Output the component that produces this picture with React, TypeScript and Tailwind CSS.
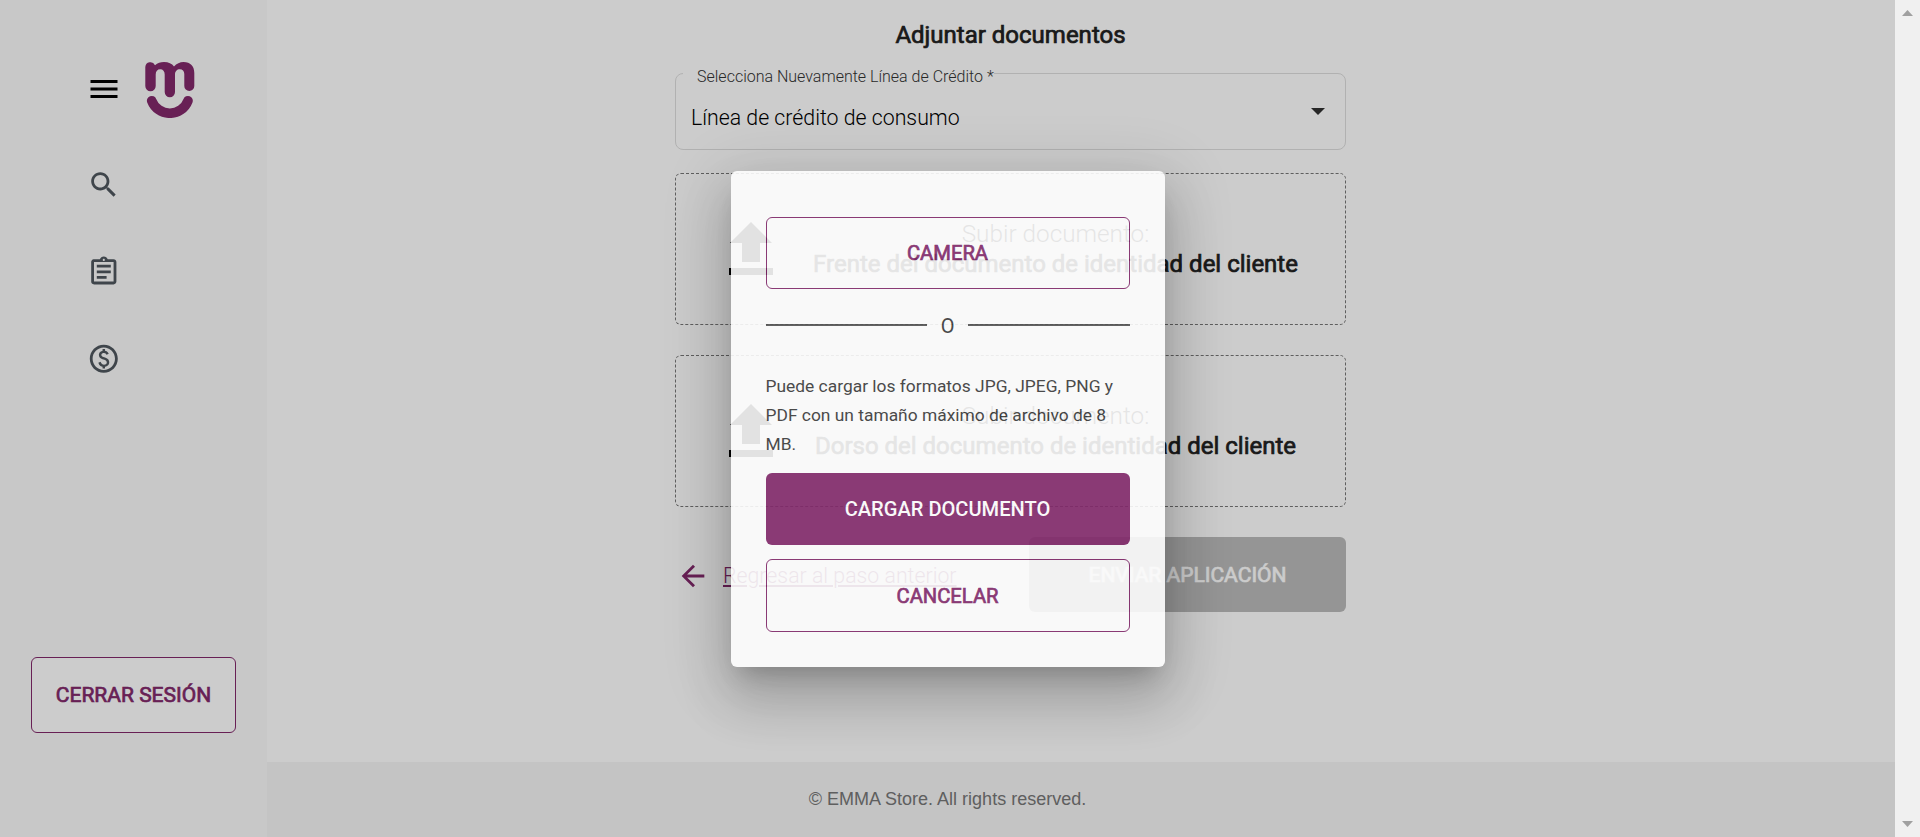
import React from "react";

type IconProps = { d: string; className: string };

function Icon({ d, className }: IconProps) {
  return (
    <svg viewBox="0 0 24 24" fill="currentColor" className={className}>
      <path d={d} />
    </svg>
  );
}

const MENU = "M3 18h18v-2H3v2zm0-5h18v-2H3v2zm0-7v2h18V6H3z";
const SEARCH =
  "M15.5 14h-.79l-.28-.27C15.41 12.59 16 11.11 16 9.5 16 5.91 13.09 3 9.5 3S3 5.91 3 9.5 5.91 16 9.5 16c1.61 0 3.09-.59 4.23-1.57l.27.28v.79l5 4.99L20.49 19l-4.99-5zm-6 0C7.01 14 5 11.99 5 9.5S7.01 5 9.5 5 14 7.01 14 9.5 11.99 14 9.5 14z";
const ASSIGNMENT =
  "M7 15h7v2H7zm0-4h10v2H7zm0-4h10v2H7zm12-4h-4.18C14.4 1.84 13.3 1 12 1c-1.3 0-2.4.84-2.82 2H5c-.14 0-.27.01-.4.04-.39.08-.74.28-1.01.55-.18.18-.33.4-.43.64-.1.23-.16.49-.16.77v14c0 .27.06.54.16.78s.25.45.43.64c.27.27.62.47 1.01.55.13.02.26.03.4.03h14c1.1 0 2-.9 2-2V5c0-1.1-.9-2-2-2zm-7-.25c.41 0 .75.34.75.75s-.34.75-.75.75-.75-.34-.75-.75.34-.75.75-.75zM19 19H5V5h14v14z";
const PAID =
  "M12 2C6.48 2 2 6.48 2 12s4.48 10 10 10 10-4.48 10-10S17.52 2 12 2zm0 18c-4.41 0-8-3.59-8-8s3.59-8 8-8 8 3.59 8 8-3.59 8-8 8zm.89-8.9c-1.78-.59-2.64-.96-2.64-1.9 0-1.02 1.11-1.39 1.81-1.39 1.31 0 1.79.99 1.9 1.34l1.58-.67c-.15-.44-.82-1.91-2.66-2.23V5h-1.75v1.26c-2.6.56-2.62 2.85-2.62 2.96 0 2.27 2.25 2.91 3.35 3.31 1.58.56 2.28 1.07 2.28 2.03 0 1.13-1.05 1.61-1.98 1.61-1.82 0-2.34-1.87-2.4-2.09l-1.66.67c.63 2.19 2.28 2.78 3.02 2.96V19h1.75v-1.24c.52-.09 3.02-.59 3.02-3.22.01-1.39-.6-2.61-3-3.44z";
const BACK = "M20 11H7.83l5.59-5.59L12 4l-8 8 8 8 1.41-1.41L7.83 13H20v-2z";

function Logo() {
  return (
    <svg viewBox="5 5 50 57" className="h-[57px] w-[50px] text-[#82286b]">
      <path
        fill="currentColor"
        d="M5.3 11A5.1 5.1 0 0 1 15 9.2C17.5 7 20.5 6 24 6C28.5 6 32 7.5 34 10.5C36.5 7.5 40 6 43.5 6C50.5 6 54.3 10 54.3 17V30A5 5 0 0 1 44.3 30V18C44.3 15 42.5 13.3 39.8 13.3C37 13.3 35 15.3 35 18.5V36A5.15 5.15 0 0 1 24.7 36V18.5C24.7 15.3 23 13.3 20.2 13.3C17.4 13.3 15.7 15.3 15.7 18.5V30A5.2 5.2 0 0 1 5.3 30Z"
      />
      <path fill="none" stroke="currentColor" strokeWidth="9.6" strokeLinecap="round" d="M11.7 44.7A19.4 19.4 0 0 0 48 44.7" />
    </svg>
  );
}

function Sidebar() {
  return (
    <aside className="flex w-[267px] shrink-0 flex-col bg-[#fafafa]">
      <div className="flex h-[141px] items-start pl-[86px] pt-[61px]">
        <Icon d={MENU} className="mt-[10px] h-9 w-9 text-black" />
        <div className="ml-[23px]"><Logo /></div>
      </div>
      <nav className="flex flex-col text-[#4f575e]">
        {[SEARCH, ASSIGNMENT, PAID].map((d, i) => (
          <a key={i} className="flex h-[87px] items-center pl-[87px]">
            <Icon d={d} className="h-[33.6px] w-[33.6px]" />
          </a>
        ))}
      </nav>
      <button className="ml-[31px] mt-[255px] flex h-[76px] w-[205px] items-center justify-center rounded-md border border-[#82286b] bg-white pt-px text-[21px] text-[#82286b] [-webkit-text-stroke:0.7px]">
        CERRAR SESIÓN
      </button>
    </aside>
  );
}

function UploadBox({ title }: { title: string }) {
  return (
    <div className="flex h-[152px] items-center rounded-md border border-dashed border-[#777] pl-[53px]">
      <svg viewBox="0 0 44 53" className="mb-[2px] h-[53px] w-[44px] text-black" fill="currentColor">
        <path d="M22 0L43 21H31V40H13V21H1ZM0 46H44V53H0Z" />
      </svg>
      <div className="ml-[40px] w-[485px] whitespace-nowrap text-center text-[24.3px] leading-[30px] text-[#212121]">
        <p className="font-light">Subir documento:</p>
        <p className="text-[24px] leading-[30px] [-webkit-text-stroke:0.7px]">{title}</p>
      </div>
    </div>
  );
}

function Main() {
  return (
    <div className="flex w-[1628px] flex-col bg-white">
      <main className="ml-[408px] flex h-[762px] w-[671px] flex-col">
        <h1 className="mt-[16px] text-center text-[24px] leading-[38px] text-[#212121] [-webkit-text-stroke:0.7px]">Adjuntar documentos</h1>
        <fieldset className="mt-[7px] h-[89px] rounded-lg border border-[#dedede] pl-[7px]">
          <legend className="h-[24px] whitespace-nowrap pl-[14px] text-base font-light leading-[31px] text-[#333]">
            Selecciona Nuevamente Línea de Crédito *
          </legend>
          <div className="flex items-start justify-between pl-2 pr-[20px]">
            <span className="mt-[17px] text-[21.3px] font-light leading-8 text-black">Línea de crédito de consumo</span>
            <svg viewBox="0 0 14 7" className="mt-[23px] h-[7px] w-[14px] text-[#303030]" fill="currentColor"><path d="M0 0h14L7 7z" /></svg>
          </div>
        </fieldset>
        <div className="mt-[23px] flex flex-col gap-[30px]">
          <UploadBox title="Frente del documento de identidad del cliente" />
          <UploadBox title="Dorso del documento de identidad del cliente" />
        </div>
        <div className="mt-[30px] flex items-center justify-between">
          <a className="flex items-center pt-[3px] text-[#82286b]">
            <Icon d={BACK} className="ml-px h-[34px] w-[34px]" />
            <span className="ml-[13px] text-[21.3px] font-light underline">Regresar al paso anterior</span>
          </a>
          <button className="h-[75px] w-[317px] rounded-md bg-[#bbb] pt-[3px] text-[21px] text-white [-webkit-text-stroke:0.7px]">ENVIAR APLICACIÓN</button>
        </div>
      </main>
      <footer className="flex h-[75px] items-center justify-center bg-[#f5f5f5] pb-[2px] pr-[267px] font-['Liberation_Sans'] text-lg text-[#777]">
        © EMMA Store. All rights reserved.
      </footer>
    </div>
  );
}

function Dialog() {
  return (
    <div className="absolute inset-y-0 left-0 flex w-[1895px] items-center justify-center bg-black/20">
      <div className="flex h-[496px] w-[434px] flex-col rounded-md bg-white px-[35px] pt-[46px] text-[#3a3a3a] opacity-[0.885] shadow-[0_15px_21px_-10px_rgba(0,0,0,0.22),0_32px_51px_4px_rgba(0,0,0,0.16),0_12px_62px_11px_rgba(0,0,0,0.14)]">
        <button className="h-[72px] shrink-0 rounded-md border border-[#82286b] pt-[2px] text-[20.2px] text-[#82286b] [-webkit-text-stroke:0.7px]">CAMERA</button>
        <div className="flex h-[72px] items-center gap-[14px] pt-px text-xl">
          <span className="h-[2px] flex-1 bg-[#555]" />
          <span className="pt-px">O</span>
          <span className="h-[2px] flex-1 bg-[#555]" />
        </div>
        <p className="mt-[11px] text-[17.4px] leading-[29px]">Puede cargar los formatos JPG, JPEG, PNG y PDF con un tamaño máximo de archivo de 8 MB.</p>
        <button className="mt-[14px] h-[72px] shrink-0 rounded-md bg-[#82286b] pt-px text-[20.1px] font-medium text-white">CARGAR DOCUMENTO</button>
        <button className="mt-[14.5px] h-[72.5px] shrink-0 rounded-md border border-[#82286b] pt-[2px] text-[20.2px] text-[#82286b] [-webkit-text-stroke:0.7px]">CANCELAR</button>
      </div>
    </div>
  );
}

function Scrollbar() {
  return (
    <div className="flex w-[25px] flex-col items-center justify-between bg-[#f0f0f0] py-[10px] text-[#a0a0a0]">
      <svg viewBox="0 0 11 6" className="h-[6px] w-[11px]" fill="currentColor"><path d="M5.5 0L11 6H0z" /></svg>
      <svg viewBox="0 0 11 6" className="h-[6px] w-[11px]" fill="currentColor"><path d="M0 0h11L5.5 6z" /></svg>
    </div>
  );
}

export default function App() {
  return (
    <div className="relative flex h-[837px] w-[1920px] overflow-hidden font-[Roboto,sans-serif]">
      <Sidebar />
      <Main />
      <Scrollbar />
      <Dialog />
    </div>
  );
}
